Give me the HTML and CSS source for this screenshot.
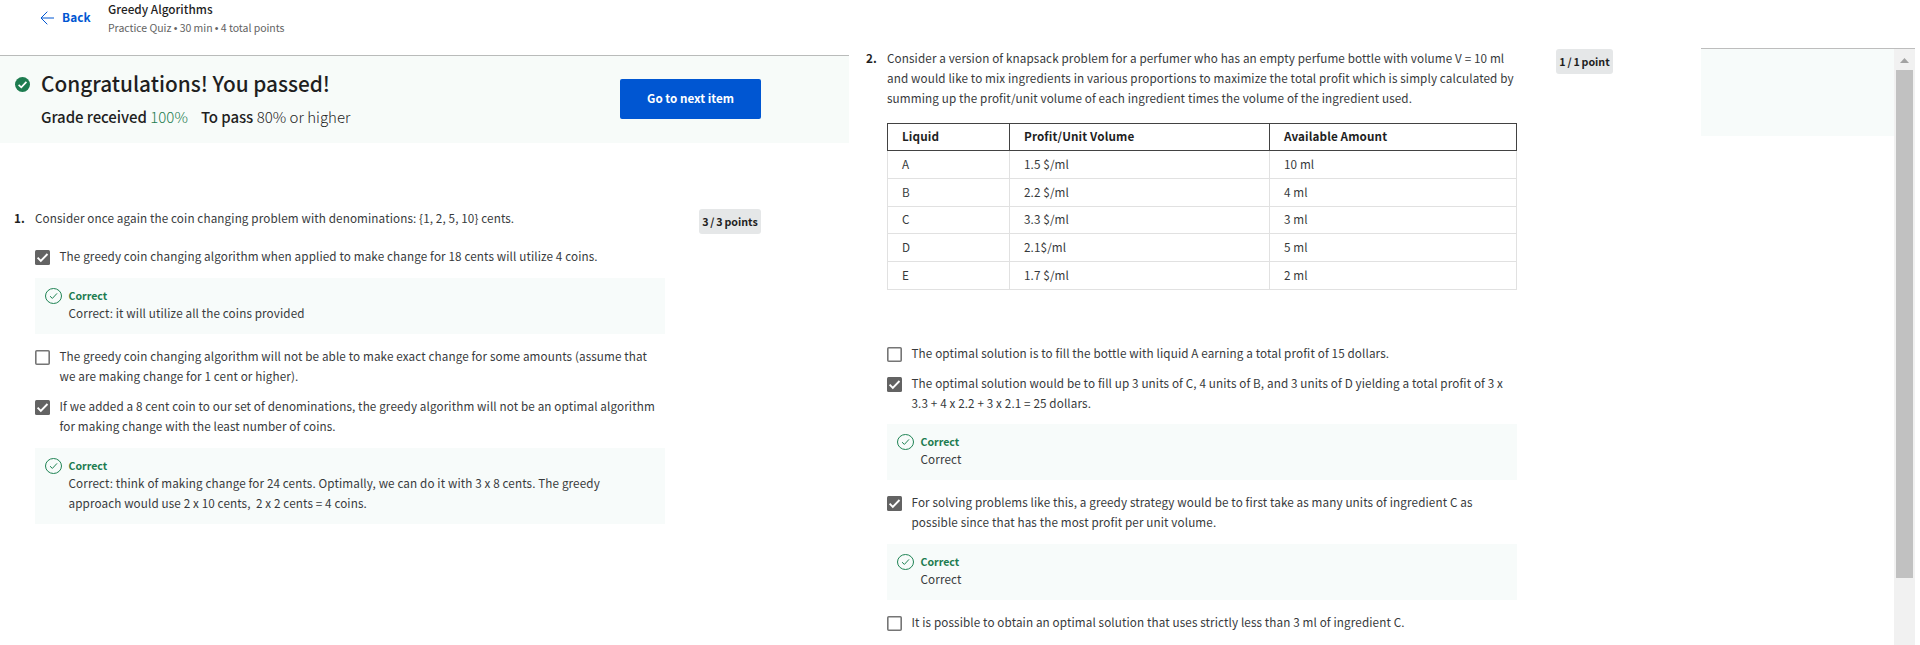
FILE: index.html
```html
<!DOCTYPE html>
<html lang="en">
<head>
<meta charset="utf-8">
<title>Greedy Algorithms</title>
<link rel="stylesheet" href="styles.css">
</head>
<body>
<svg class="defs" width="0" height="0" aria-hidden="true">
  <symbol id="box-on" viewBox="0 0 15 15"><rect width="15" height="15" rx="1.5" fill="#636363"/><path d="M2.6 7.6 5.8 10.8 12.5 4" fill="none" stroke="#fff" stroke-width="1.9"/></symbol>
  <symbol id="box-off" viewBox="0 0 15 15"><rect x=".8" y=".8" width="13.4" height="13.4" rx="1" fill="#fff" stroke="#757575" stroke-width="1.6"/></symbol>
  <symbol id="ok" viewBox="0 0 17 16"><ellipse cx="8.5" cy="8" rx="8" ry="7.5" fill="none" stroke="#1f8354"/><path d="M5 8.2 7.4 10.4 12 5.4" fill="none" stroke="#1f8354"/></symbol>
</svg>
<div class="page">
  <section class="left">
    <header class="topbar">
      <a class="back"><svg class="arrow" viewBox="0 0 14 14"><path d="M7.3.7 1 7l6.3 6.3M1 7h13" fill="none" stroke="#0056d2"/></svg><span class="back-label">Back</span></a>
      <div class="titles"><div class="title">Greedy Algorithms</div><div class="subtitle">Practice Quiz <span class="dot">•</span> 30 min <span class="dot">•</span> 4 total points</div></div>
    </header>
    <div class="banner">
      <svg class="passed" viewBox="0 0 15 15"><circle cx="7.5" cy="7.5" r="7.5" fill="#1d7c50"/><path d="M3.6 7.8 6.3 10.3 11.4 4.9" fill="none" stroke="#fff" stroke-width="1.7"/></svg>
      <div class="result">
        <h1 class="congrats">Congratulations! You passed!</h1>
        <div class="grade"><span class="grade-item"><b class="g-label">Grade received</b> <span class="pct">100%</span></span><span class="grade-item"><b class="p-label">To pass</b> <span class="need">80% or higher</span></span></div>
      </div>
      <button class="next"><span class="next-label">Go to next item</span></button>
    </div>
    <article class="question q1">
      <div class="num">1.</div>
      <div class="body">
        <p class="prompt">Consider once again the coin changing problem with denominations: {1, 2, 5, 10} cents.</p>
        <div class="option first"><svg class="box"><use href="#box-on"/></svg><p class="text">The greedy coin changing algorithm when applied to make change for 18 cents will utilize 4 coins.</p></div>
        <div class="feedback"><svg class="ok"><use href="#ok"/></svg><div><div class="correct">Correct</div><p class="text">Correct: it will utilize all the coins provided</p></div></div>
        <div class="option"><svg class="box"><use href="#box-off"/></svg><p class="text">The greedy coin changing algorithm will not be able to make exact change for some amounts (assume that<br>we are making change for 1 cent or higher).</p></div>
        <div class="option"><svg class="box"><use href="#box-on"/></svg><p class="text">If we added a 8 cent coin to our set of denominations, the greedy algorithm will not be an optimal algorithm<br>for making change with the least number of coins.</p></div>
        <div class="feedback"><svg class="ok"><use href="#ok"/></svg><div><div class="correct">Correct</div><p class="text">Correct: think of making change for 24 cents. Optimally, we can do it with 3 x 8 cents. The greedy<br>approach would use 2 x 10 cents,&nbsp; 2 x 2 cents = 4 coins.</p></div></div>
      </div>
      <div class="points">3 / 3 points</div>
    </article>
  </section>
  <section class="middle">
    <article class="question q2">
      <div class="num">2.</div>
      <div class="body">
        <p class="prompt">Consider a version of knapsack problem for a perfumer who has an empty perfume bottle with volume V = 10 ml<br>and would like to mix ingredients in various proportions to maximize the total profit which is simply calculated by<br>summing up the profit/unit volume of each ingredient times the volume of the ingredient used.</p>
        <table class="data">
          <tr class="head"><th class="c1">Liquid</th><th class="c2">Profit/Unit Volume</th><th class="c3">Available Amount</th></tr>
          <tr class="tall"><td>A</td><td>1.5 $/ml</td><td>10 ml</td></tr>
          <tr class="tall"><td>B</td><td>2.2 $/ml</td><td>4 ml</td></tr>
          <tr class="short"><td>C</td><td>3.3 $/ml</td><td>3 ml</td></tr>
          <tr class="tall"><td>D</td><td>2.1$/ml</td><td>5 ml</td></tr>
          <tr class="tall"><td>E</td><td>1.7 $/ml</td><td>2 ml</td></tr>
        </table>
        <div class="option first"><svg class="box"><use href="#box-off"/></svg><p class="text">The optimal solution is to fill the bottle with liquid A earning a total profit of 15 dollars.</p></div>
        <div class="option"><svg class="box"><use href="#box-on"/></svg><p class="text">The optimal solution would be to fill up 3 units of C, 4 units of B, and 3 units of D yielding a total profit of 3 x<br>3.3 + 4 x 2.2 + 3 x 2.1 = 25 dollars.</p></div>
        <div class="feedback tight"><svg class="ok"><use href="#ok"/></svg><div><div class="correct">Correct</div><p class="text">Correct</p></div></div>
        <div class="option"><svg class="box"><use href="#box-on"/></svg><p class="text">For solving problems like this, a greedy strategy would be to first take as many units of ingredient C as<br>possible since that has the most profit per unit volume.</p></div>
        <div class="feedback"><svg class="ok"><use href="#ok"/></svg><div><div class="correct">Correct</div><p class="text">Correct</p></div></div>
        <div class="option"><svg class="box"><use href="#box-off"/></svg><p class="text">It is possible to obtain an optimal solution that uses strictly less than 3 ml of ingredient C.</p></div>
      </div>
      <div class="points">1 / 1 point</div>
    </article>
  </section>
  <aside class="right">
    <div class="strip"></div>
    <div class="scrollbar"><svg class="up" viewBox="0 0 9 5"><path d="M0 5 4.5 0 9 5z" fill="#a3a3a3"/></svg><div class="thumb"></div></div>
  </aside>
</div>
</body>
</html>
```
FILE: styles.css
```css
* { box-sizing: border-box; }
body { margin: 0; background: #fff; color: #373a3c; font-family: "Noto Sans CJK SC", "Noto Sans", sans-serif; font-size: 11.7px; line-height: 20px; letter-spacing: 0.115px; white-space: nowrap; overflow: hidden; }
p, h1 { margin: 0; font-weight: 400; }
svg { display: block; flex: none; }
.defs { position: absolute; }
.page { display: flex; width: 1920px; height: 645px; overflow: hidden; }
.left { width: 849px; }
.middle { width: 852px; padding-top: 49px; }
.right { display: flex; width: 214px; height: 645px; padding-top: 48px; align-items: flex-start; background: linear-gradient(#bdbdbd, #bdbdbd) 0 48px / 214px 1px no-repeat; }

.topbar { display: flex; height: 56px; padding-left: 40px; border-bottom: 1px solid #b9bbba; }
.back { display: flex; height: 36px; align-items: center; gap: 8px; width: 68px; color: #0056d2; font-weight: 700; font-size: 11.8px; }
.back-label { padding-bottom: 2px; }
.arrow { width: 14px; height: 14px; }
.titles { line-height: 18px; }
.title { height: 18px; color: #1f1f1f; font-size: 11.8px; font-weight: 500; letter-spacing: 0; }
.subtitle { height: 18px; padding-top: 1px; color: #636363; font-size: 10.5px; letter-spacing: -0.03px; }
.dot { font-family: "Liberation Sans", sans-serif; }

.banner { display: flex; height: 87px; padding-left: 15px; background: #f7fbf9; }
.passed { width: 15px; height: 15px; margin-top: 21px; }
.result { width: 590px; padding: 11px 0 0 11px; color: #1f1f1f; }
.congrats { height: 32px; line-height: 32px; font-size: 20.8px; font-weight: 500; letter-spacing: 0; }
.grade { display: flex; gap: 13px; margin-top: 6px; font-size: 15px; line-height: 24px; letter-spacing: 0.02px; }
.grade b { font-weight: 500; letter-spacing: -0.07px; }
.pct { color: #1d7c50; }
.pct, .need { font-weight: 300; }
.next { width: 141px; height: 40px; margin-top: 23px; padding: 0 0 2px; border: 0; border-radius: 2px; background: #0056d2; color: #fff; font: 700 11.65px/20px "Noto Sans CJK SC", sans-serif; }

.question { display: flex; }
.q1 { padding: 66px 0 0 14px; }
.q2 { padding-left: 17px; }
.num { width: 21px; margin-top: -1px; font-weight: 700; color: #1f1f1f; }
.body { width: 630px; }
.prompt { margin-top: -1px; padding-bottom: 1px; }
.text { margin-top: -1px; padding-bottom: 1px; }
.points { height: 25px; margin: 0 0 0 34px; border-radius: 3px; background: #e5e7e8; color: #1f1f1f; font-size: 10.7px; font-weight: 700; line-height: 25px; letter-spacing: 0; word-spacing: -0.6px; text-align: center; }
.q1 .points { width: 62px; }
.q2 .points { width: 57px; margin-left: 39px; }
.option { display: flex; gap: 9.5px; margin-top: 10px; }
.q1 .first { margin-top: 18px; }
.q2 .first { margin-top: 54px; }
.box { width: 15px; height: 15px; margin-top: 3px; }
.feedback { display: flex; gap: 6.5px; margin-top: 11px; padding: 10px; background: #f7fbfa; }
.tight { margin-top: 10px; }
.feedback + .option { margin-top: 13px; }
.ok { width: 17px; height: 16px; }
.correct { height: 16px; line-height: 16px; color: #1d7c50; font-size: 10.6px; font-weight: 700; letter-spacing: 0; }

.data { width: 630px; margin-top: 14px; border-collapse: collapse; table-layout: fixed; }
.data th, .data td { padding: 0 0 2px 14px; border: 1px solid #e1e1e1; text-align: left; line-height: 20px; }
.data .head th { height: 27px; border-color: #424242; color: #1f1f1f; font-weight: 700; }
.tall td { height: 28px; }
.short td { height: 27px; }
.c1 { width: 122px; }
.c2 { width: 260px; }

.strip { width: 193px; height: 88px; border-top: 1px solid #bdbdbd; background: #f7fbfa; }
.scrollbar { display: flex; flex-direction: column; align-items: center; width: 21px; height: 597px; margin-top: 1px; background: #f1f1f1; }
.up { width: 9px; height: 5px; margin-top: 9px; }
.thumb { width: 17px; height: 508px; margin-top: 7px; background: #c1c1c1; }
```
